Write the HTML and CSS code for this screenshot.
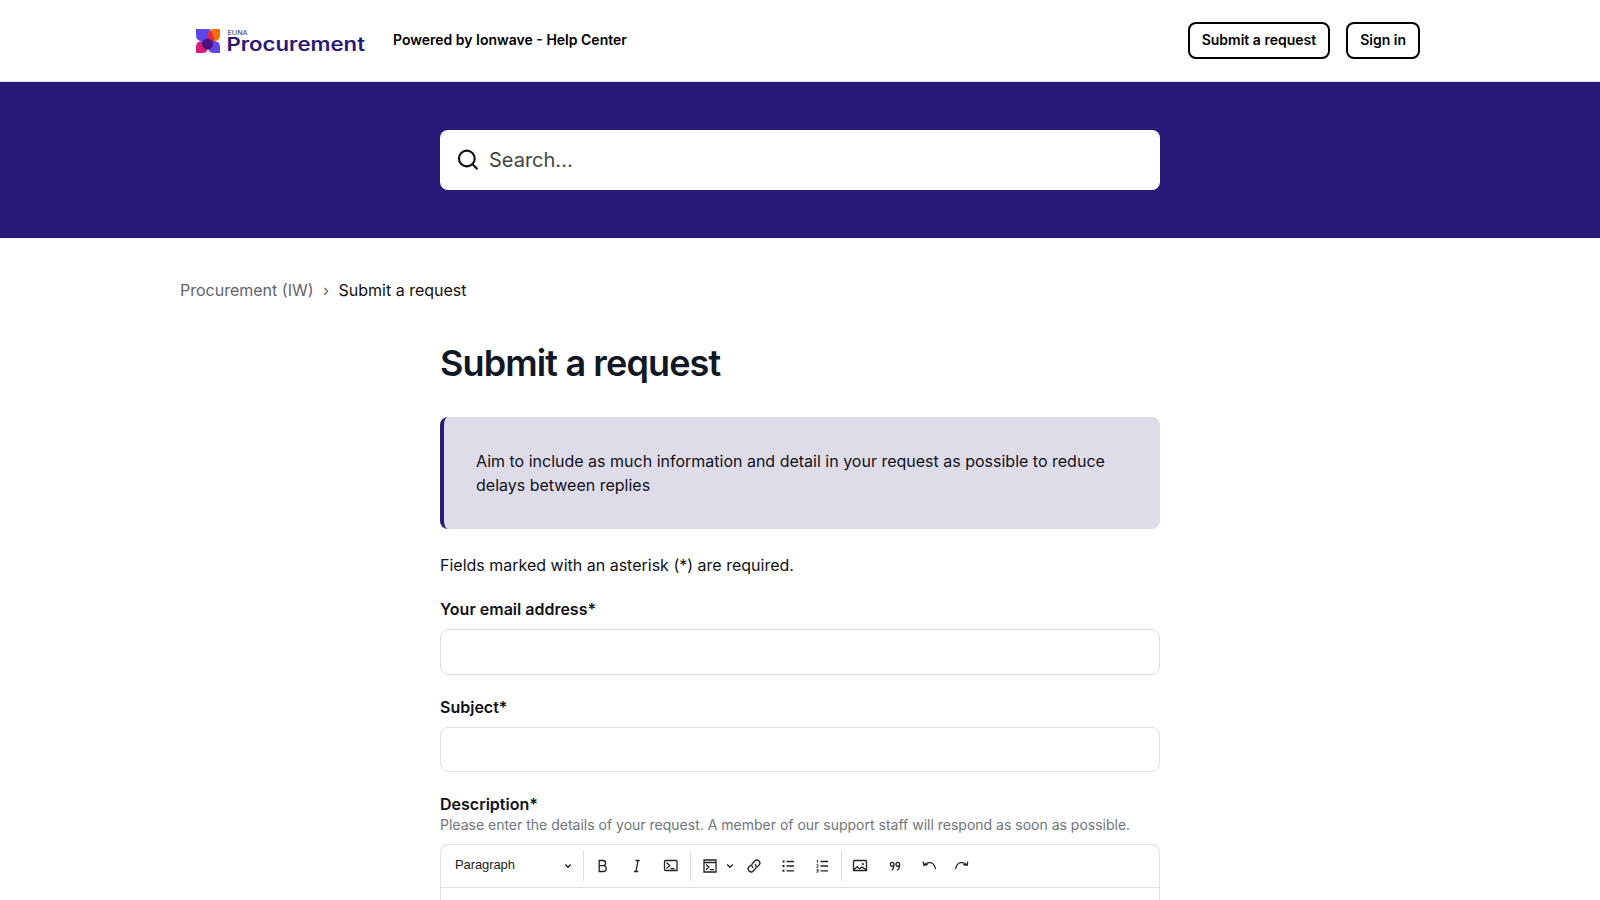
FILE: index.html
```html
<!DOCTYPE html>
<html lang="en">
<head>
<meta charset="utf-8">
<title>Submit a request</title>
<link rel="stylesheet" href="styles.css">
</head>
<body>
<header class="header">
  <a class="brand">
    <svg class="logo" width="184" height="41" viewBox="188 20 184 41" role="img" aria-label="Euna Procurement">
      <path d="M196 29h12q6 0 6 6v6h-12q-6 0-6-6z" fill="#5b45ef"/>
      <path d="M220 29v6q0 6-6 6h-6v-6q0-6 6-6z" fill="#ff6d0a"/>
      <path d="M196 53v-6q0-6 6-6h6v6q0 6-6 6z" fill="#d81d78"/>
      <path d="M208 41h6q6 0 6 6v6h-6q-6 0-6-6z" fill="#6245e6"/>
      <path d="M208 41v-6q0-3 2-4.500q4 3 4 10.500z" fill="#e02a50"/>
      <circle cx="207.500" cy="44" r="5.500" fill="#4c1280"/>
      <text class="logo-small" x="227.500" y="34.500" textLength="20" lengthAdjust="spacingAndGlyphs">EUNA</text>
      <text class="logo-large" x="226.500" y="51.400" textLength="138.500" lengthAdjust="spacingAndGlyphs">Procurement</text>
    </svg>
    <span class="brand-name">Powered by Ionwave - Help Center</span>
  </a>
  <nav class="actions"><a class="btn">Submit a request</a><a class="btn">Sign in</a></nav>
</header>
<section class="hero">
  <div class="search">
    <svg width="22" height="22" viewBox="0 0 22 22" fill="none" stroke="#111" stroke-width="2.100"><circle cx="9.800" cy="9.500" r="7.900"/><path d="M15.300 15l5.200 5.200"/></svg>
    <span>Search...</span>
  </div>
</section>
<nav class="crumbs"><a>Procurement (IW)</a><span class="crumb-sep">›</span><span class="crumb-current">Submit a request</span></nav>
<main class="form">
  <h1 class="title">Submit a request</h1>
  <p class="notice">Aim to include as much information and detail in your request as possible to reduce delays between replies</p>
  <p class="required">Fields marked with an asterisk (*) are required.</p>
  <div class="field"><label class="label" for="email">Your email address*</label><input class="input" id="email"></div>
  <div class="field"><label class="label" for="subject">Subject*</label><input class="input short" id="subject"></div>
  <div class="field">
    <span class="label">Description*</span>
    <p class="hint">Please enter the details of your request. A member of our support staff will respond as soon as possible.</p>
    <div class="editor">
      <div class="toolbar">
        <span class="style-select"><span class="style-name">Paragraph</span><svg class="caret" viewBox="0 0 8 8"><path d="M1.200 2.500L4 5.300l2.800-2.800"/></svg></span>
        <i class="divider"></i>
        <span class="tool first"><svg viewBox="0 0 20 20"><path d="M7.200 4.500h3.800a2.600 2.600 0 0 1 0 5.200H7.200zM7.200 9.700h4.200a2.900 2.900 0 0 1 0 5.800H7.200z"/></svg></span>
        <span class="tool"><svg viewBox="0 0 20 20"><path d="M8.500 4.500h4.200M7 15.500h4.200M11 4.500L9 15.500"/></svg></span>
        <span class="tool code"><svg viewBox="0 0 20 20"><path d="M4.500 4.500h10.500a1 1 0 0 1 1 1v9h-11.500a1 1 0 0 1-1-1v-8a1 1 0 0 1 1-1zM5.500 6.500l3.200 3-3.200 3M9.500 12.600h4"/></svg></span>
        <i class="divider"></i>
        <span class="tool block"><svg viewBox="0 0 20 20"><path d="M4 4h12v12H4zM4 6.500h12M6 8.500l3 2.600-3 2.700M9.800 13.700h4.200"/></svg></span>
        <span class="tool arrow"><svg class="caret" viewBox="0 0 8 8"><path d="M1.200 2.500L4 5.300l2.800-2.800"/></svg></span>
        <span class="tool"><svg viewBox="0 0 20 20"><g transform="rotate(-45 10 10)"><path d="M8.600 7H6a3 3 0 0 0 0 6h3a3 3 0 0 0 2.800-3.600M11.400 13H14a3 3 0 0 0 0-6h-3a3 3 0 0 0-2.800 3.600"/></g></svg></span>
        <span class="tool"><svg viewBox="0 0 20 20"><path d="M8.500 5.500H16M8.500 10H16M8.500 14.800H16"/><path class="dots" d="M4.500 4.500h2v2h-2zM4.500 9h2v2h-2zM4.500 13.800h2v2h-2z"/></svg></span>
        <span class="tool numbers"><svg viewBox="0 0 20 20"><path d="M8.500 5.500H16M8.500 10H16M8.500 14.800H16"/><path class="digits" d="M4.500 4.700l1-.5v2.800M4.400 8.700h1.700v1.200l-1.500 1.300h1.700M4.400 13.300h1.700v2.900H4.400M4.700 14.700h1.400"/></svg></span>
        <i class="divider"></i>
        <span class="tool first"><svg viewBox="0 0 20 20"><path d="M4.500 4.500h11a1 1 0 0 1 1 1v9h-13v-9a1 1 0 0 1 1-1zM4 13.500l3.200-2.700 2.300 2 2.500-1.700 4 2.400"/><circle class="dots" cx="12.800" cy="8" r="1.100"/></svg></span>
        <span class="tool"><svg viewBox="0 0 20 20"><path d="M9 8.300a1.800 2 0 1 1-3.600 0a1.800 2 0 1 1 3.600 0c0 3-.6 4.700-2.300 5.900M14.600 8.300a1.800 2 0 1 1-3.600 0a1.800 2 0 1 1 3.600 0c0 3-.6 4.700-2.300 5.900"/></svg></span>
        <span class="tool undo"><svg viewBox="0 0 20 20"><path d="M4.300 5.700l.5 3.500 3.900-.7M4.800 9.200C8 5.400 15 5 16.500 13"/></svg></span>
        <span class="tool"><svg viewBox="0 0 20 20"><path d="M15.700 5.700l-.5 3.500-3.900-.7M15.200 9.200C12 5.400 5 5 3.500 13"/></svg></span>
      </div>
    </div>
  </div>
</main>
</body>
</html>
```

FILE: styles.css
```css
* { box-sizing: border-box; }
html { overflow: hidden; }
body { margin: 0; height: 900px; overflow: hidden; background: #fff; color: #111118; font-family: Inter, sans-serif; font-size: 16px; line-height: 24px; }
h1, p { margin: 0; }
.header { height: 82px; padding: 0 180px 0 188px; display: flex; align-items: center; justify-content: space-between; border-bottom: 1px solid #e4e4ea; }
.brand { display: flex; align-items: center; gap: 21px; }
.logo-small { font: 6px Inter, sans-serif; fill: #29197a; }
.logo-large { font: 600 18.500px Inter, sans-serif; fill: #29197a; }
.brand-name { padding-bottom: 2px; font-size: 14px; font-weight: 600; color: #000; line-height: 20px; }
.actions { display: flex; gap: 16px; }
.btn { height: 37px; padding: 0 12px; border: 2px solid #000; border-radius: 8px; font-size: 14px; line-height: 31px; font-weight: 600; color: #000; }
.hero { height: 156px; background: #291979; padding: 48px 0; }
.search { width: 720px; height: 60px; margin: 0 auto; border-radius: 8px; background: #fff; display: flex; align-items: center; gap: 10px; padding-left: 17px; font-size: 20px; color: #444; }
.crumbs { width: 1240px; margin: 40px auto 0; display: flex; color: #646468; }
.crumb-sep { width: 25px; text-align: center; }
.crumb-current { color: #111; }
.form { width: 720px; margin: 36px auto 0; }
.title { font-size: 36px; line-height: 50px; font-weight: 600; letter-spacing: -.88px; color: #111724; }
.notice { margin-top: 29px; padding: 32px; height: 112px; border-left: 4px solid #291979; border-radius: 8px; background: #dfdcea; }
.required { margin-top: 24px; }
.field { margin-top: 20px; }
.label { display: block; font-weight: 600; }
.input { display: block; width: 100%; height: 46px; margin-top: 8px; border: 1px solid #e0e0e3; border-radius: 8px; }
.input.short { height: 45px; }
.hint { margin-top: -1px; font-size: 14px; line-height: 20px; color: #70757b; }
.editor { height: 56px; margin-top: 9px; border: 1px solid #e0e0e3; border-bottom: 0; border-radius: 8px 8px 0 0; }
.toolbar { height: 43px; border-bottom: 1px solid #e0e0e3; display: flex; align-items: center; }
.style-select { width: 142px; padding: 0 11px 0 14px; display: flex; align-items: center; justify-content: space-between; font: 13px "Liberation Sans", sans-serif; color: #222; }
.style-name { padding-bottom: 4px; letter-spacing: -.1px; }
.divider { width: 1px; height: 30px; background: #dedee2; }
.tool { width: 34px; height: 30px; display: flex; align-items: center; justify-content: center; }
.tool.first { width: 36px; }
.tool.code { margin-right: 2px; }
.tool.block { width: 37px; margin-right: -4px; }
.tool.arrow { width: 12px; margin-right: 1px; }
.tool.numbers { margin-right: 2px; }
.tool.undo { width: 33px; }
.tool svg { width: 20px; height: 20px; flex: none; fill: none; stroke: #222; stroke-width: 1.3; }
svg.caret, .tool svg.caret { width: 8px; height: 8px; fill: none; stroke: #222; stroke-width: 1.3; }
.tool .dots { fill: #222; stroke: none; }
.tool .digits { stroke-width: .8; }
```
